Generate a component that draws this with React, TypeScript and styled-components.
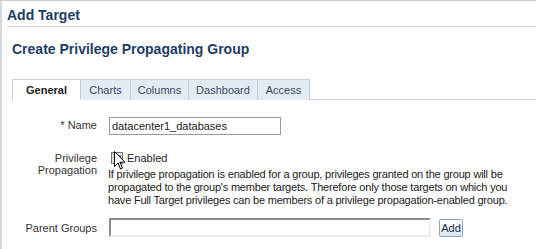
import styled, { createGlobalStyle } from 'styled-components';

const GlobalStyle = createGlobalStyle`
  html, body {
    margin: 0;
    padding: 0;
    background: #ffffff;
  }
  body {
    font-family: "Liberation Sans", Arial, sans-serif;
    font-size: 11px;
    color: #333333;
  }
`;

const Frame = styled.div`
  width: 536px;
  height: 249px;
  box-sizing: border-box;
  border-top: 1px solid #c4ccd8;
  border-left: 2px solid #d3dae4;
  overflow: hidden;
  position: relative;
`;

const Header = styled.h1`
  margin: 0 0 0 5px;
  padding: 6px 0 3px 0;
  font-size: 14px;
  font-weight: bold;
  color: #1e3d66;
  border-bottom: 1px solid #ccd3de;
  line-height: 16px;
`;

const Content = styled.div`
  padding: 14px 0 0 10px;
`;

const SubTitle = styled.h2`
  margin: 0;
  font-size: 14px;
  font-weight: bold;
  color: #1e3d66;
  line-height: 16px;
`;

const TabBar = styled.div`
  display: flex;
  margin-top: 22px;
  border-bottom: 1px solid #c8d2df;
`;

const Tab = styled.div<{ $active?: boolean; $w: number }>`
  width: ${(p) => p.$w}px;
  box-sizing: border-box;
  height: 21px;
  line-height: 20px;
  text-align: center;
  font-size: 11px;
  font-weight: ${(p) => (p.$active ? 'bold' : 'normal')};
  color: ${(p) => (p.$active ? '#222222' : '#3b4c63')};
  background: ${(p) => (p.$active ? '#ffffff' : '#e3ebf5')};
  border: 1px solid #c8d2df;
  border-left: ${(p) => (p.$active ? '1px solid #c8d2df' : 'none')};
  border-bottom: ${(p) => (p.$active ? '1px solid #ffffff' : 'none')};
  margin-bottom: -1px;
`;

const Form = styled.div`
  display: grid;
  grid-template-columns: 85px 1fr;
  column-gap: 12px;
  margin-top: 17px;
`;

const Label = styled.div<{ $top?: number }>`
  text-align: right;
  color: #333333;
  font-size: 11px;
  line-height: 12px;
  padding-top: ${(p) => p.$top ?? 0}px;
`;

const Field = styled.div<{ $gap?: number }>`
  margin-bottom: ${(p) => p.$gap ?? 0}px;
`;

const TextInput = styled.input<{ $w: number }>`
  display: block;
  box-sizing: border-box;
  width: ${(p) => p.$w}px;
  height: 18px;
  border: 1px solid #9c9c9c;
  padding: 0 2px;
  font-family: "Liberation Sans", Arial, sans-serif;
  font-size: 11px;
  color: #222222;
  outline: none;
`;

const InsetInput = styled(TextInput)`
  height: 19px;
  border-top: 2px solid #8d8d8d;
  border-left: 2px solid #8d8d8d;
  border-bottom: 2px solid #ececea;
  border-right: 2px solid #ececea;
`;

const CheckRow = styled.div`
  display: flex;
  align-items: center;
  gap: 4px;
  position: relative;
  height: 14px;
  font-size: 11px;
  color: #222222;
`;

const CheckBox = styled.span`
  width: 12px;
  height: 12px;
  box-sizing: border-box;
  border: 1px solid #6f7276;
  background: linear-gradient(135deg, #d6d7d2, #f6f6f3);
  margin-left: 2px;
  display: flex;
  align-items: center;
  justify-content: center;
`;

const Cursor = styled.svg`
  position: absolute;
  left: 5px;
  top: 0px;
`;

const Help = styled.div`
  font-size: 11px;
  line-height: 13px;
  letter-spacing: -0.2px;
  color: #222222;
  margin-top: 3px;
  margin-left: -1px;
  white-space: nowrap;
`;

const InlineRow = styled.div`
  display: flex;
  align-items: flex-end;
  gap: 8px;
`;

const AddButton = styled.button`
  height: 18px;
  width: 24px;
  padding: 0;
  font-family: "Liberation Sans", Arial, sans-serif;
  font-size: 11px;
  color: #1b2a44;
  background: linear-gradient(#ffffff, #dde6f2);
  border: 1px solid #8ea3c2;
  border-radius: 2px;
  line-height: 14px;
`;

export default function App() {
  return (
    <>
      <GlobalStyle />
      <Frame>
        <Header>Add Target</Header>
        <Content>
          <SubTitle>Create Privilege Propagating Group</SubTitle>
          <TabBar>
            <Tab $active $w={69}>General</Tab>
            <Tab $w={50}>Charts</Tab>
            <Tab $w={58}>Columns</Tab>
            <Tab $w={69}>Dashboard</Tab>
            <Tab $w={52}>Access</Tab>
          </TabBar>
          <Form>
            <Label $top={2}>* Name</Label>
            <Field $gap={16}>
              <TextInput $w={172} defaultValue="datacenter1_databases" />
            </Field>

            <Label $top={1}>
              Privilege
              <br />
              Propagation
            </Label>
            <Field $gap={11}>
              <CheckRow>
                <CheckBox>
                  <svg width="9" height="9" viewBox="0 0 9 9">
                    <path d="M1.5 4.5 L3.5 6.5 L7.5 1.5" stroke="#222" strokeWidth="1.6" fill="none" />
                  </svg>
                </CheckBox>
                Enabled
                <Cursor width="12" height="19" viewBox="0 0 12 19">
                  <path d="M0.5 0.5 L0.5 15.5 L4 12 L6.5 18 L8.5 17 L6 11.2 L11 11.2 Z" fill="#ffffff" stroke="#000000" strokeWidth="1" />
                </Cursor>
              </CheckRow>
              <Help>
                If privilege propagation is enabled for a group, privileges granted on the group will be
                <br />
                propagated to the group's member targets. Therefore only those targets on which you
                <br />
                have Full Target privileges can be members of a privilege propagation-enabled group.
              </Help>
            </Field>

            <Label $top={4}>Parent Groups</Label>
            <InlineRow>
              <InsetInput $w={322} />
              <AddButton>Add</AddButton>
            </InlineRow>
          </Form>
        </Content>
      </Frame>
    </>
  );
}
